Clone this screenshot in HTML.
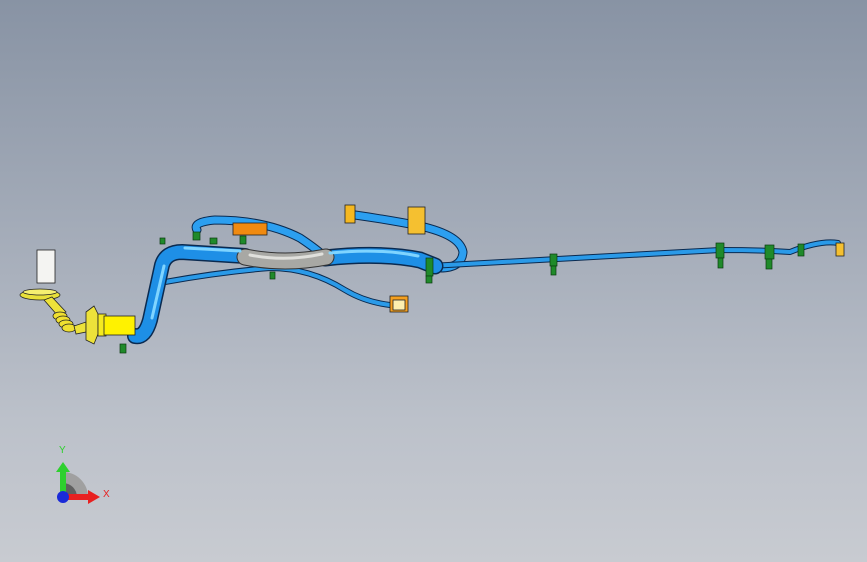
<!DOCTYPE html>
<html><head><style>
html,body{margin:0;padding:0;width:867px;height:562px;overflow:hidden}
body{background:linear-gradient(180deg,#8893a4 0%,#a3abb8 40%,#bcc1ca 75%,#c8cbd1 100%)}
svg{position:absolute;left:0;top:0}
</style></head><body>
<svg width="867" height="562" viewBox="0 0 867 562" xmlns="http://www.w3.org/2000/svg">
<g fill="none" stroke-linecap="round" stroke-linejoin="round">
<path d="M165 282 Q220 272 270 268 Q310 268 345 290 Q365 302 390 305" stroke="#0a2a50" stroke-width="6"/>
<path d="M165 282 Q220 272 270 268 Q310 268 345 290 Q365 302 390 305" stroke="#2a9ae8" stroke-width="4"/>
<path d="M197 230 Q192 222 215 220 Q265 220 300 238 Q318 250 326 258" stroke="#0a2a50" stroke-width="9"/>
<path d="M197 230 Q192 222 215 220 Q265 220 300 238 Q318 250 326 258" stroke="#2c9ff0" stroke-width="7"/>
<path d="M355 215 Q390 220 420 226 Q460 235 463 252 Q462 268 440 268" stroke="#0a2a50" stroke-width="9"/>
<path d="M355 215 Q390 220 420 226 Q460 235 463 252 Q462 268 440 268" stroke="#2c9ff0" stroke-width="7"/>
<path d="M430 266 Q600 256 720 250 Q760 250 790 252 Q820 240 838 243" stroke="#0a2a50" stroke-width="6"/>
<path d="M430 266 Q600 256 720 250 Q760 250 790 252 Q820 240 838 243" stroke="#2a9ae8" stroke-width="4"/>
<path d="M135 336 Q145 338 150 320 L162 265 Q166 252 182 252 L245 256" stroke="#0a2a50" stroke-width="16"/>
<path d="M135 336 Q145 338 150 320 L162 265 Q166 252 182 252 L245 256" stroke="#1e8fe6" stroke-width="13"/>
<path d="M325 258 Q380 252 420 260 L435 266" stroke="#0a2a50" stroke-width="17"/>
<path d="M325 258 Q380 252 420 260 L435 266" stroke="#1e8fe6" stroke-width="14"/>
<path d="M245 257 Q285 265 326 257" stroke="#333" stroke-width="17"/>
<path d="M245 257 Q285 265 326 257" stroke="#a8a8a4" stroke-width="15"/>
<path d="M250 255 Q285 262 322 254" stroke="#e0e0dc" stroke-width="3"/>
<path d="M152 318 L164 266" stroke="#7fd4ff" stroke-width="3"/>
<path d="M185 248 L240 251" stroke="#7fd4ff" stroke-width="3"/>
<path d="M330 253 Q380 248 418 256" stroke="#7fd4ff" stroke-width="3"/>
</g>
<g stroke="#222" stroke-width="0.8">
<rect x="37" y="250" width="18" height="33" fill="#f4f4f2"/>
<ellipse cx="40" cy="295" rx="20" ry="5" fill="#e8e03a"/>
<ellipse cx="40" cy="292" rx="17" ry="3" fill="#f5ef70"/>
<path d="M44 300 L58 316 L66 312 L52 297Z" fill="#ede23a"/>
<g fill="#f0e030">
<ellipse cx="60" cy="316" rx="7" ry="4"/><ellipse cx="63" cy="320" rx="7" ry="4"/><ellipse cx="66" cy="324" rx="7" ry="4"/><ellipse cx="69" cy="328" rx="7" ry="4"/>
</g>
<path d="M74 326 L86 322 L86 332 L76 334Z" fill="#ede23a"/>
<path d="M86 312 L94 306 L98 314 L98 334 L94 344 L86 340Z" fill="#ede23a"/>
<rect x="98" y="314" width="8" height="22" fill="#f5ea20"/>
<rect x="104" y="316" width="31" height="19" fill="#fff200"/>
<rect x="345" y="205" width="10" height="18" fill="#f5b820"/>
<rect x="408" y="207" width="17" height="27" fill="#f5c030"/>
<rect x="233" y="223" width="34" height="12" fill="#f08a10"/>
<rect x="390" y="296" width="18" height="16" fill="#f5a020"/>
<rect x="393" y="300" width="12" height="10" fill="#fdf0b0"/>
<rect x="836" y="243" width="8" height="13" fill="#f5c030"/>
</g>
<g fill="#1f8a2a" stroke="#0a3a10" stroke-width="0.7">
<rect x="193" y="232" width="7" height="8"/><rect x="210" y="238" width="7" height="6"/>
<rect x="240" y="236" width="6" height="8"/><rect x="270" y="272" width="5" height="7"/>
<rect x="426" y="258" width="7" height="18"/><rect x="426" y="276" width="6" height="7"/>
<rect x="550" y="254" width="7" height="12"/><rect x="551" y="266" width="5" height="9"/>
<rect x="716" y="243" width="8" height="15"/><rect x="718" y="258" width="5" height="10"/>
<rect x="765" y="245" width="9" height="14"/><rect x="766" y="259" width="6" height="10"/>
<rect x="798" y="244" width="6" height="12"/><rect x="120" y="344" width="6" height="9"/>
<rect x="160" y="238" width="5" height="6"/>
</g>
<path d="M63 497 L63 472 A25 25 0 0 1 88 497Z" fill="#a0a0a0"/>
<path d="M63 497 L63 483 A14 14 0 0 1 77 497Z" fill="#606060"/>
<rect x="60" y="470" width="6" height="27" fill="#2ed02e"/>
<path d="M56 472 L63 462 L70 472Z" fill="#2ed02e"/>
<rect x="63" y="494" width="27" height="6" fill="#e82020"/>
<path d="M88 490 L100 497 L88 504Z" fill="#e82020"/>
<circle cx="63" cy="497" r="6" fill="#1a2ad8"/>
<text x="59" y="453" font-family="Liberation Sans,sans-serif" font-size="10" fill="#2ed02e">Y</text>
<text x="103" y="497" font-family="Liberation Sans,sans-serif" font-size="10" fill="#e82020">X</text>
</svg>
</body></html>
